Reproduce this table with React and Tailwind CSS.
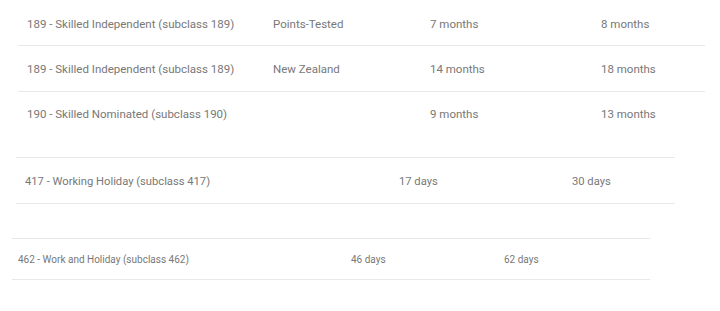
const mainRows = [
  { visa: "189 - Skilled Independent (subclass 189)", stream: "Points-Tested", p75: "7 months", p90: "8 months" },
  { visa: "189 - Skilled Independent (subclass 189)", stream: "New Zealand", p75: "14 months", p90: "18 months" },
  { visa: "190 - Skilled Nominated (subclass 190)", stream: "", p75: "9 months", p90: "13 months" },
];

export default function App() {
  return (
    <div className="w-[720px] h-[311px] pt-[1px] bg-white overflow-hidden text-[#787878] font-['Roboto',sans-serif]">
      {/* skilled visas */}
      <div className="ml-[18px] w-[687px] text-[11.5px]">
        {mainRows.map((row, i) => (
          <div
            key={i}
            className={
              i === 0
                ? "flex items-center h-[45px] pl-[9px] pt-[3px] border-b border-[#e8e8e8]"
                : i === 1
                ? "flex items-center h-[46px] pl-[9px] pt-[2px] border-b border-[#e8e8e8]"
                : "flex items-start h-[65px] pl-[9px] pt-[14px]"
            }
          >
            <div className="w-[246px]">{row.visa}</div>
            <div className="w-[157px]">{row.stream}</div>
            <div className="w-[171px]">{row.p75}</div>
            <div>{row.p90}</div>
          </div>
        ))}
      </div>

      {/* working holiday */}
      <div className="ml-[16px] w-[659px] text-[11.2px] border-y border-[#e8e8e8]">
        <div className="flex items-center h-[45px] pl-[9px] pt-[3px]">
          <div className="w-[374px]">417 - Working Holiday (subclass 417)</div>
          <div className="w-[173px]">17 days</div>
          <div>30 days</div>
        </div>
      </div>

      <div className="h-[34px]"></div>

      {/* work and holiday */}
      <div className="ml-[12px] w-[638px] text-[10px] border-y border-[#e8e8e8]">
        <div className="flex items-center h-[40px] pl-[6px] pt-[1px]">
          <div className="w-[333px]">462 - Work and Holiday (subclass 462)</div>
          <div className="w-[153px]">46 days</div>
          <div>62 days</div>
        </div>
      </div>
    </div>
  );
}
